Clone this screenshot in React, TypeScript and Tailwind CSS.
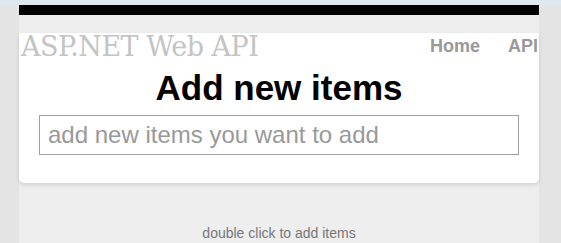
export default function App() {
  return (
    <div className="w-[561px] h-[243px] overflow-hidden bg-[#e4e4e4] flex flex-col font-['Liberation_Sans',Arial,sans-serif]">
      <div className="h-[5px] bg-[#dfe7f1] shrink-0" />
      <div className="ml-[19px] w-[520px] flex-1 flex flex-col bg-[#eeeeee]">
        <div className="h-[10px] bg-black shrink-0" />
        <div className="h-[18px] shrink-0" />
        <div className="bg-white rounded-b-[5px] shadow-[0_2px_4px_rgba(0,0,0,0.12)] h-[150px] flex flex-col">
          <div className="flex items-start justify-between h-[30px]">
            <span className="pl-[2px] text-[#c4c4c4] text-[27px] leading-[30px] font-[DejaVu_Serif,serif] tracking-[-0.5px] -mt-[1px]">
              ASP.NET Web API
            </span>
            <nav className="flex gap-[28px] pr-[1px] pt-[3px] text-[18px] font-bold leading-[20px] text-[#999999]">
              <a>Home</a>
              <a>API</a>
            </nav>
          </div>
          <h1 className="text-center text-[35px] font-bold leading-none text-black mt-[7px]">
            Add new items
          </h1>
          <div className="px-[20px] mt-[10px]">
            <input
              className="w-full h-[40px] border border-[#a0a0a0] px-[8px] text-[24px] outline-none placeholder:text-[#999999] font-['Liberation_Sans',Arial,sans-serif]"
              placeholder="add new items you want to add"
            />
          </div>
        </div>
        <div className="flex-1 flex items-end justify-center">
          <p className="text-[14px] text-[#777777] leading-none mb-[3px]">double click to add items</p>
        </div>
      </div>
    </div>
  );
}
